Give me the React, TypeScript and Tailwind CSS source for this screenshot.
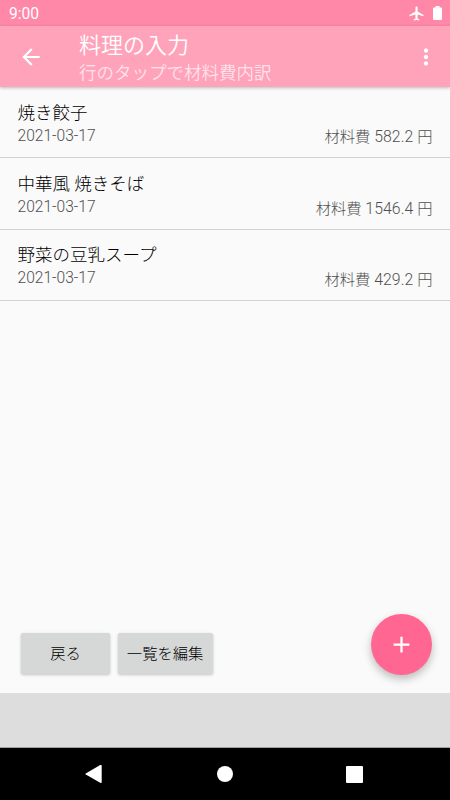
import React from "react";
import { MdAdd, MdAirplanemodeActive, MdArrowBack, MdMoreVert } from "react-icons/md";

interface Dish {
  name: string;
  date: string;
  cost: string;
}

const dishes: Array<Dish> = [
  { name: "焼き餃子", date: "2021-03-17", cost: "582.2" },
  { name: "中華風 焼きそば", date: "2021-03-17", cost: "1546.4" },
  { name: "野菜の豆乳スープ", date: "2021-03-17", cost: "429.2" },
];

const DishRow = ({ name, date, cost }: Dish) => (
  <li className="flex h-[71.3px] justify-between border-b border-[#d2d2d2] px-[17.5px]">
    <div className="pt-[12.6px]">
      <p className="text-[17.5px] leading-[26px] text-black">{name}</p>
      <p className="text-[15.6px] leading-[20px] text-[#505050]">{date}</p>
    </div>
    <p className="self-end pb-[9px] text-[15.3px] leading-[22px] text-[#505050]">
      材料費 <span className="text-[15.8px] tracking-[0.1px]">{cost}</span> 円
    </p>
  </li>
);

const App = () => {
  return (
    <div className="flex h-[800px] w-[450px] flex-col overflow-hidden bg-[#fafafa] font-[Roboto,'Noto_Sans_CJK_JP',sans-serif] font-light">
      <div className="flex h-[26px] shrink-0 items-center justify-between bg-[#ff87a7] pl-[9px] pr-2 text-white">
        <span className="pt-[3px] text-[15.6px] font-normal">9:00</span>
        <div className="flex items-center gap-2">
          <MdAirplanemodeActive className="h-[17px] w-[17px]" />
          <svg className="h-[14px] w-[9px] fill-white" viewBox="0 0 9 14">
            <path d="M2.5 0h4v1.5H8q1 0 1 1V13q0 1-1 1H1q-1 0-1-1V2.5q0-1 1-1h1.5Z" />
          </svg>
        </div>
      </div>

      <header className="z-10 flex h-[61px] shrink-0 items-center bg-[#ffa3bb] pl-[18px] pr-[11px] text-white shadow-[0_1px_3px_rgba(0,0,0,0.25)]">
        <button title="戻る">
          <MdArrowBack className="h-[26px] w-[26px]" />
        </button>
        <div className="ml-[35px] flex-1 pt-1 font-[350]">
          <h1 className="text-[22px] leading-[28px]">料理の入力</h1>
          <p className="text-[17.5px] leading-[26px] text-white/70">行のタップで材料費内訳</p>
        </div>
        <button title="メニュー">
          <MdMoreVert className="h-[26px] w-[26px]" />
        </button>
      </header>

      <main className="flex flex-1 flex-col justify-between">
        <ul>
          {dishes.map((dish) => (
            <DishRow key={dish.name} {...dish} />
          ))}
        </ul>
        <div className="flex items-end justify-between pb-[18px] pl-[21.3px] pr-[17.6px]">
          <div className="flex gap-2 pb-[1.3px] text-[15.3px] text-black">
            <button className="h-[40.7px] w-[88.3px] rounded-[2px] bg-[#d6d8d7] pt-[2px] shadow-[0_1px_3px_rgba(0,0,0,0.22)]">
              戻る
            </button>
            <button className="h-[40.7px] w-[95px] rounded-[2px] bg-[#d6d8d7] pt-[2px] shadow-[0_1px_3px_rgba(0,0,0,0.22)]">
              一覧を編集
            </button>
          </div>
          <button
            title="追加"
            className="flex h-[61px] w-[61px] items-center justify-center rounded-full bg-[#ff6792] text-white shadow-[0_4px_8px_rgba(0,0,0,0.25)]"
          >
            <MdAdd className="h-[27px] w-[27px]" />
          </button>
        </div>
      </main>

      <div className="h-[55px] shrink-0 border-b border-[#a0a0a0] bg-[#dddddd]" />

      <nav className="flex h-[52px] shrink-0 items-center justify-between bg-black pl-[85px] pr-[87px]">
        <svg className="h-[18px] w-[17px] fill-white" viewBox="0 0 17 18">
          <path d="M.8 8.4 15.2.1Q16.7-.5 16.7.9v16q0 1.5-1.5.9L.8 9.6Q0 9 .8 8.4Z" />
        </svg>
        <div className="ml-[2px] h-4 w-4 rounded-full bg-white" />
        <div className="h-[17px] w-[17px] rounded-[1px] bg-white" />
      </nav>
    </div>
  );
};

export default App;
